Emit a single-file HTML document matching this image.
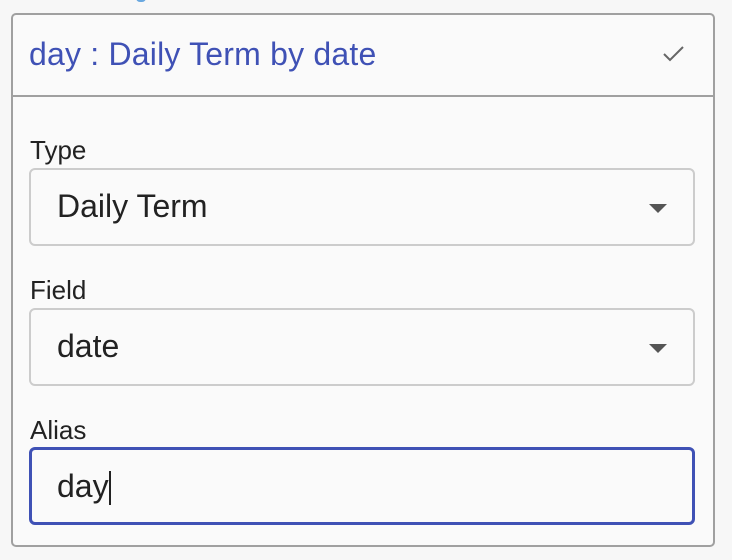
<!DOCTYPE html>
<html><head><style>
body{margin:0;width:732px;height:560px;background:#f7f7f7;font-family:"Liberation Sans",Arial,sans-serif;position:relative;overflow:hidden}
.panel{position:absolute;left:11px;top:13px;width:700px;height:530px;border:2px solid #a0a0a0;border-radius:5px;background:#fafafa}
.hdr{position:absolute;left:0;top:0;width:700px;height:80px;border-bottom:2px solid #a0a0a0}
.hdr span{position:absolute;left:16px;top:21px;font-size:32px;letter-spacing:0.2px;color:#3f51b5}
.chk{position:absolute;left:649px;top:29px}
.lbl{position:absolute;left:17px;font-size:26px;color:#222}
.box{position:absolute;left:16px;width:662px;height:74px;border:2px solid #ccc;border-radius:6px;background:#fafafa}
.box span{position:absolute;left:26px;top:18px;font-size:32px;color:#222}
.arr{position:absolute;left:618px;top:34px;width:0;height:0;border-left:9px solid transparent;border-right:9px solid transparent;border-top:9px solid #555}
.focus{border:3px solid #3f51b5;width:660px;height:72px}
.caret{display:inline-block;width:2px;height:34px;background:#222;vertical-align:-8px}
</style></head><body>
<div style="position:absolute;left:136px;top:-6px;width:10px;height:8px;border-radius:4px;background:#6aa8e0"></div>
<div class="panel">
<div class="hdr"><span>day : Daily Term by date</span>
<svg class="chk" width="24" height="20" viewBox="0 0 24 20"><path d="M2 10 L8 16 L21 3" fill="none" stroke="#666" stroke-width="2"/></svg></div>
<div class="lbl" style="top:120px">Type</div>
<div class="box" style="top:153px"><span>Daily Term</span><div class="arr"></div></div>
<div class="lbl" style="top:260px">Field</div>
<div class="box" style="top:293px"><span>date</span><div class="arr"></div></div>
<div class="lbl" style="top:400px">Alias</div>
<div class="box focus" style="top:432px"><span style="left:25px">day<i class="caret"></i></span></div>
</div>
</body></html>
